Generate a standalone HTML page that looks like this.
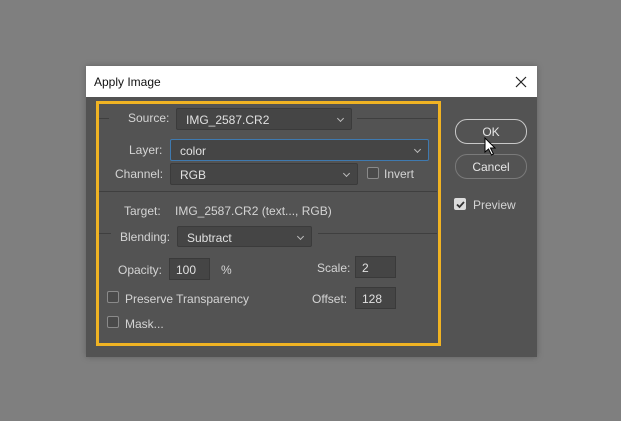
<!DOCTYPE html>
<html><head><style>
*{margin:0;padding:0;box-sizing:border-box}
body{width:621px;height:421px;background:#7f7f7f;position:relative;font-family:"Liberation Sans",sans-serif;font-size:12px;color:#d4d4d4;overflow:hidden}
.a{position:absolute}
.dlg{left:86px;top:66px;width:451px;height:291px;background:#535353;box-shadow:0 0 6px rgba(0,0,0,.25)}
.title{left:86px;top:66px;width:451px;height:31px;background:#fff;color:#111;font-size:12px;padding:9px 0 0 8px}
.dd{background:#454545;border:1px solid #3b3b3b;border-radius:2px;padding:4px 0 0 9px;color:#e0e0e0}
.dd:after{content:"";position:absolute;right:8px;top:7px;width:4px;height:4px;border-right:1px solid #bbb;border-bottom:1px solid #bbb;transform:rotate(45deg)}
.in{background:#454545;border:1px solid #3a3a3a;padding:4px 0 0 6px;color:#e0e0e0}
.cb{width:12px;height:12px;border:1px solid #8a8a8a;border-radius:2px;background:#4a4a4a}
.line{height:1px;background:#3f3f3f}
.btn{border:1.5px solid #aaa;border-radius:12px;text-align:center;padding-top:5px;color:#e6e6e6}
</style></head><body>
<div class="a dlg"></div>
<div class="a title">Apply Image</div>
<svg class="a" style="left:515px;top:76px" width="12" height="12"><path d="M1 1L11 11M11 1L1 11" stroke="#222" stroke-width="1.2"/></svg>
<div class="a" style="left:96px;top:101px;width:345px;height:245px;border:3px solid #f0b323"></div>
<div class="a line" style="left:99px;top:118px;width:10px"></div>
<div class="a line" style="left:357px;top:118px;width:80px"></div>
<div class="a" style="left:128px;top:111px">Source:</div>
<div class="a dd" style="left:176px;top:108px;width:176px;height:22px">IMG_2587.CR2</div>
<div class="a" style="left:129px;top:143px">Layer:</div>
<div class="a dd" style="left:170px;top:139px;width:259px;height:22px;border:1px solid #3f7ab0">color</div>
<div class="a" style="left:115px;top:167px">Channel:</div>
<div class="a dd" style="left:170px;top:163px;width:188px;height:22px">RGB</div>
<div class="a cb" style="left:367px;top:167px"></div>
<div class="a" style="left:384px;top:167px">Invert</div>
<div class="a line" style="left:99px;top:191px;width:338px"></div>
<div class="a" style="left:124px;top:204px">Target:</div>
<div class="a" style="left:175px;top:204px">IMG_2587.CR2 (text..., RGB)</div>
<div class="a line" style="left:99px;top:233px;width:12px"></div>
<div class="a line" style="left:318px;top:233px;width:119px"></div>
<div class="a" style="left:120px;top:230px">Blending:</div>
<div class="a dd" style="left:177px;top:226px;width:135px;height:21px">Subtract</div>
<div class="a" style="left:118px;top:263px">Opacity:</div>
<div class="a in" style="left:169px;top:258px;width:41px;height:22px">100</div>
<div class="a" style="left:221px;top:263px">%</div>
<div class="a" style="left:317px;top:261px">Scale:</div>
<div class="a in" style="left:355px;top:256px;width:41px;height:22px">2</div>
<div class="a cb" style="left:107px;top:291px"></div>
<div class="a" style="left:125px;top:292px">Preserve Transparency</div>
<div class="a" style="left:312px;top:292px">Offset:</div>
<div class="a in" style="left:355px;top:287px;width:41px;height:22px">128</div>
<div class="a cb" style="left:107px;top:316px"></div>
<div class="a" style="left:125px;top:317px">Mask...</div>
<div class="a btn" style="left:455px;top:119px;width:72px;height:25px;border-color:#c8c8c8">OK</div>
<div class="a btn" style="left:455px;top:154px;width:72px;height:25px;border-color:#7a7a7a">Cancel</div>
<div class="a cb" style="left:454px;top:198px;background:#ddd;border-color:#ddd"></div>
<svg class="a" style="left:455px;top:199px" width="11" height="11"><path d="M2 5.5L4.5 8L9 3" stroke="#333" stroke-width="1.8" fill="none"/></svg>
<div class="a" style="left:473px;top:198px">Preview</div>
<svg class="a" style="left:484px;top:137px" width="14" height="20"><path d="M1 1L1 15L4.5 12L7.5 18L9.5 17L6.5 11L11 11Z" fill="#fff" stroke="#000" stroke-width="1"/></svg>
</body></html>
